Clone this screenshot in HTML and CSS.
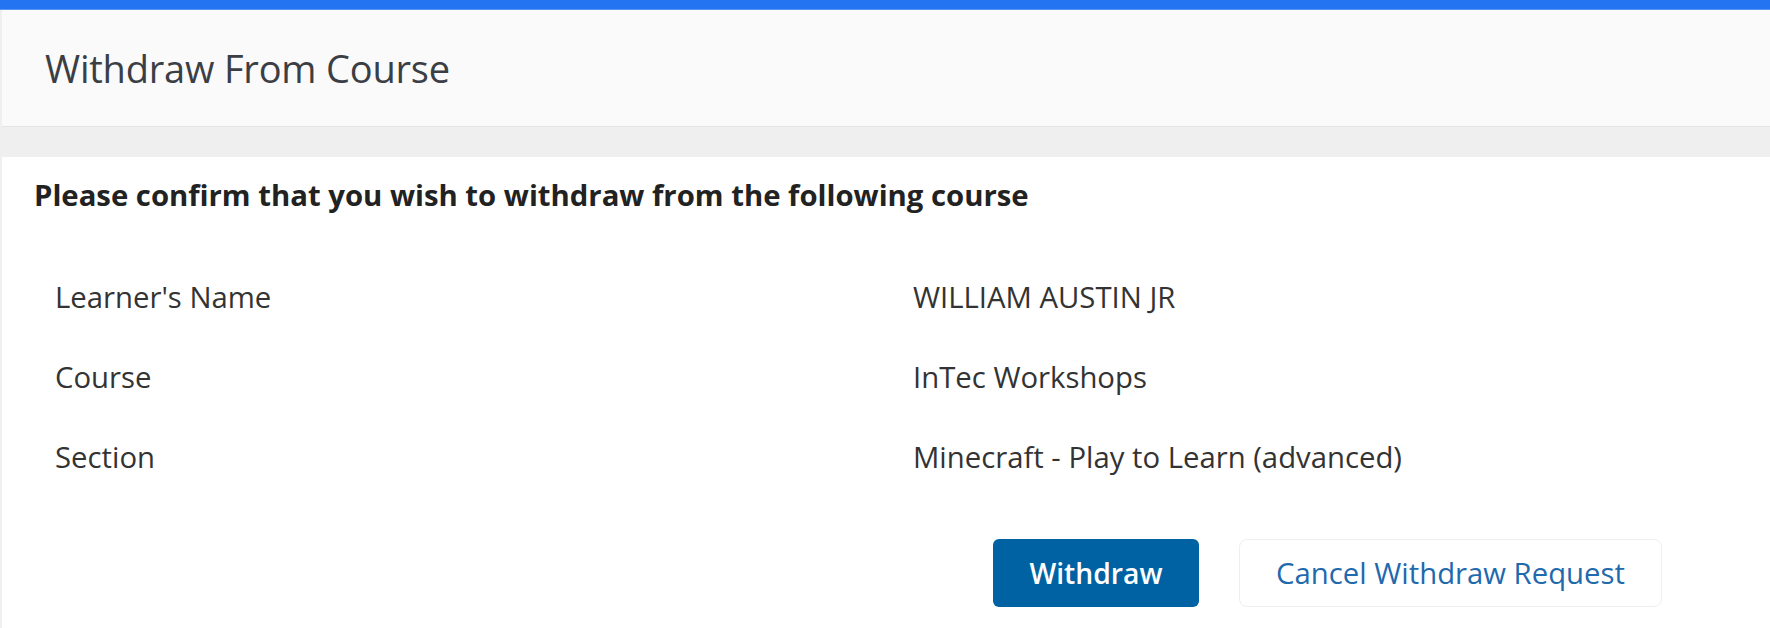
FILE: index.html
```html
<!DOCTYPE html>
<html lang="en">
<head>
<meta charset="utf-8">
<title>Withdraw From Course</title>
<link rel="stylesheet" href="styles.css">
</head>
<body>
<div class="topbar"></div>
<div class="page">
  <header class="panel-head">
    <h1 class="title">Withdraw From Course</h1>
  </header>
  <main class="panel-body">
    <p class="confirm">Please confirm that you wish to withdraw from the following course</p>
    <div class="details">
      <div class="label">Learner's Name</div><div class="value">WILLIAM AUSTIN JR</div>
      <div class="label">Course</div><div class="value">InTec Workshops</div>
      <div class="label">Section</div><div class="value">Minecraft - Play to Learn (advanced)</div>
    </div>
    <div class="actions">
      <button class="btn btn-primary" type="button">Withdraw</button>
      <button class="btn btn-secondary" type="button">Cancel Withdraw Request</button>
    </div>
  </main>
</div>
</body>
</html>
```
FILE: styles.css
```css
* { box-sizing: border-box; }
html, body { margin: 0; padding: 0; }
body {
  background: #efefef;
  font-family: "Open Sans", "Noto Sans", "Liberation Sans", sans-serif;
  color: #333;
  height: 628px;
  overflow: hidden;
}
.topbar {
  height: 10px;
  background: #2473f0;
  border-bottom: 1px solid #5b95f2;
}
.page {
  padding-left: 2px;
}
.panel-head {
  height: 117px;
  background: #fafafa;
  border-bottom: 1px solid #e4e4e6;
  display: flex;
  align-items: center;
  padding-left: 43px;
}
.title {
  margin: 0;
  font-weight: 400;
  font-size: 38px;
  color: #3b3f45;
  letter-spacing: -0.2px;
}
.panel-body {
  margin-top: 30px;
  background: #fff;
  height: 480px;
  padding: 18px 0 0 32px;
}
.confirm {
  margin: 0;
  font-weight: 700;
  font-size: 29.3px;
  line-height: 40px;
  color: #222;
}
.details {
  display: grid;
  grid-template-columns: 858px 1fr;
  row-gap: 40px;
  margin-top: 62px;
  padding-left: 21px;
  font-size: 29.3px;
  line-height: 40px;
  color: #333;
}
.actions {
  display: flex;
  gap: 40px;
  margin-top: 62px;
  padding-left: 959px;
}
.btn {
  font-family: inherit;
  height: 68px;
  border-radius: 6px;
  cursor: pointer;
}
.btn-primary {
  width: 206px;
  background: #0062a3;
  color: #fff;
  border: none;
  font-weight: 600;
  font-size: 28.3px;
}
.btn-secondary {
  width: 423px;
  background: #fff;
  color: #1f69ad;
  border: 1px solid #efefef;
  border-radius: 8px;
  font-weight: 400;
  font-size: 29.3px;
}
```
